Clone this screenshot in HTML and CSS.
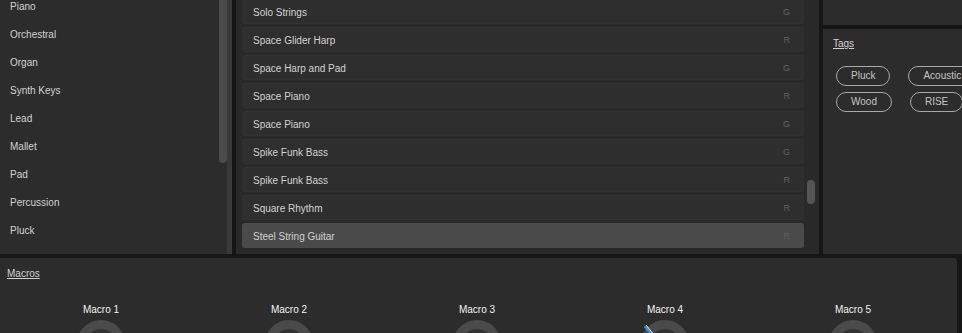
FILE: index.html
```html
<!DOCTYPE html>
<html lang="en">
    <head>
        <meta charset="UTF-8">
        <link rel="stylesheet" href="styles.css">
    </head>
    <body>
        <div class="top">
            <section class="panel categories">
                <ul class="category_list">
                    <li>Piano</li>
                    <li>Orchestral</li>
                    <li>Organ</li>
                    <li>Synth Keys</li>
                    <li>Lead</li>
                    <li>Mallet</li>
                    <li>Pad</li>
                    <li>Percussion</li>
                    <li>Pluck</li>
                </ul>
                <div class="scrollbar category_scroll"><div class="thumb"></div></div>
            </section>
            <section class="panel presets">
                <ul class="preset_list">
                    <li class="preset"><span>Solo Strings</span><span class="kind">G</span></li>
                    <li class="preset"><span>Space Glider Harp</span><span class="kind">R</span></li>
                    <li class="preset"><span>Space Harp and Pad</span><span class="kind">G</span></li>
                    <li class="preset"><span>Space Piano</span><span class="kind">R</span></li>
                    <li class="preset"><span>Space Piano</span><span class="kind">G</span></li>
                    <li class="preset"><span>Spike Funk Bass</span><span class="kind">G</span></li>
                    <li class="preset"><span>Spike Funk Bass</span><span class="kind">R</span></li>
                    <li class="preset"><span>Square Rhythm</span><span class="kind">R</span></li>
                    <li class="preset selected"><span>Steel String Guitar</span><span class="kind">R</span></li>
                </ul>
                <div class="scrollbar preset_scroll"><div class="thumb"></div></div>
            </section>
            <div class="side">
                <section class="panel info"></section>
                <section class="panel tags">
                    <h3 class="label">Tags</h3>
                    <div class="tag_row">
                        <span class="tag">Pluck</span>
                        <span class="tag">Acoustic</span>
                    </div>
                    <div class="tag_row">
                        <span class="tag">Wood</span>
                        <span class="tag">RISE</span>
                    </div>
                </section>
            </div>
        </div>
        <section class="panel macros">
            <h3 class="label">Macros</h3>
            <div class="macro_grid">
                <div class="macro"><span class="macro_name">Macro 1</span><div class="knob"></div></div>
                <div class="macro"><span class="macro_name">Macro 2</span><div class="knob"></div></div>
                <div class="macro"><span class="macro_name">Macro 3</span><div class="knob"></div></div>
                <div class="macro">
                    <span class="macro_name">Macro 4</span>
                    <div class="knob">
                        <svg class="needle" width="14" height="16" viewBox="0 0 14 16">
                            <line x1="2" y1="3" x2="11" y2="14" stroke="#3f8fd8" stroke-width="3"/>
                            <line x1="3" y1="2" x2="12" y2="13" stroke="#dfe8f0" stroke-width="1"/>
                        </svg>
                    </div>
                </div>
                <div class="macro"><span class="macro_name">Macro 5</span><div class="knob"></div></div>
            </div>
        </section>
    </body>
</html>
```

FILE: styles.css
```css
body {
    margin:      0px;
    width:       962px;
    height:      333px;
    overflow:    hidden;
    background:  #161616;
    color:       #d2d2d2;
    font-family: "Liberation Sans", Arial, sans-serif;
    font-size:   10px;
}

ul { list-style: none; margin: 0px; padding: 0px; }

.panel { background: #2c2c2c; overflow: hidden; }

.top {
    display: flex;
    gap:     4px;
    height:  254px;
}

/* categories */
.categories {
    flex:    0 0 232px;
    display: flex;
}

.category_list {
    flex:         1;
    margin-top:   -7px;
    padding-left: 10px;
}

.category_list li {
    height:      28px;
    line-height: 28px;
}

.category_scroll {
    width:        8px;
    border-right: solid 5px #393939;
}

.category_scroll .thumb {
    height:        163px;
    background:    #4b4b4b;
    border-radius: 0px 0px 4px 4px;
}

/* presets */
.presets {
    flex:         0 0 583px;
    display:      flex;
    padding-left: 6px;
    box-sizing:   border-box;
    background:   #292929;
}

.preset_list {
    width:          562px;
    margin-top:     -1px;
    display:        flex;
    flex-direction: column;
    gap:            3px;
}

.preset {
    height:          25px;
    display:         flex;
    align-items:     center;
    justify-content: space-between;
    padding:         1px 14px 0px 11px;
    box-sizing:      border-box;
    background:      #2e2e2e;
    border-radius:   3px;
    box-shadow:      inset 0px 0px 0px 1px #313131;
}

.preset.selected { background: #4a4a4a; box-shadow: none; }

.kind { color: #606060; font-size: 9px; }

.preset_scroll { width: 8px; margin-left: 3px; }

.preset_scroll .thumb {
    margin-top:    180px;
    height:        24px;
    background:    #555555;
    border-radius: 4px;
}

/* side column */
.side {
    flex:           1;
    min-width:      0px;
    display:        flex;
    flex-direction: column;
    gap:            4px;
}

.info { height: 25px; }

.tags {
    flex:    1;
    padding: 8px 0px 0px 10px;
}

.label {
    margin:          0px;
    font-size:       10px;
    font-weight:     normal;
    line-height:     14px;
    text-decoration: underline;
    color:           #d0d0d0;
}

.tags .label { margin-bottom: 15px; }

.tag_row {
    display:       flex;
    gap:           18px;
    margin-left:   3px;
    margin-bottom: 6px;
    white-space:   nowrap;
}

.tag {
    height:        18px;
    line-height:   18px;
    padding:       0px 14px;
    border:        solid 1px #a8a8a8;
    border-radius: 10px;
    color:         #c4c4c4;
}

/* macros */
.macros {
    width:         957px;
    height:        80px;
    margin-top:    4px;
    padding:       9px 7px 0px 7px;
    box-sizing:    border-box;
    border-radius: 0px 4px 0px 0px;
}

.macro_grid {
    display:               grid;
    grid-template-columns: repeat(5, 188px);
    margin-top:            22px;
}

.macro {
    display:        flex;
    flex-direction: column;
    align-items:    center;
    gap:            3px;
}

.macro_name {
    line-height: 14px;
    color:       #f2f2f2;
}

.knob {
    position:      relative;
    width:         30px;
    height:        30px;
    border:        solid 9px #4a4a4a;
    border-radius: 50%;
    background:    #323232;
}

.needle {
    position: absolute;
    left:     -7px;
    top:      -6px;
}
```
